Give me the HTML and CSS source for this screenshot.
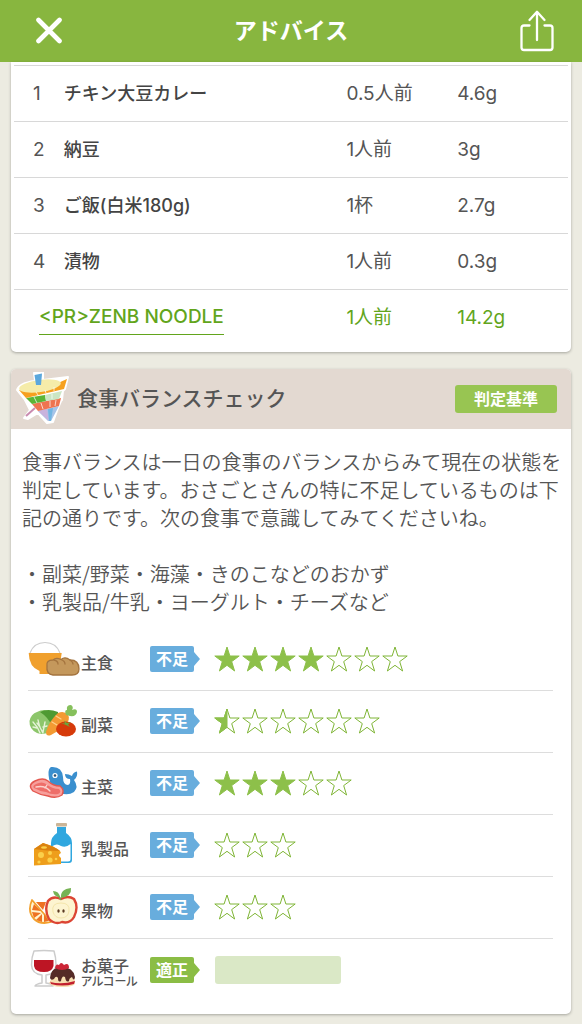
FILE: index.html
```html
<!DOCTYPE html>
<html lang="ja">
<head>
    <meta charset="UTF-8">
    <meta name="viewport" content="width=device-width, initial-scale=1.0">
    <title>アドバイス</title>
    <link rel="stylesheet" href="styles.css">
</head>
<body>
    <svg width="0" height="0" class="defs" aria-hidden="true">
        <symbol id="star" viewBox="0 0 26 26">
            <path d="M13 1 L15.9 10 H25.2 L17.7 15.6 L20.6 25 L13 19.3 L5.4 25 L8.3 15.6 L0.8 10 H10.1 Z" />
        </symbol>
    </svg>

    <header class="topbar">
        <button type="button" class="icon-btn" aria-label="閉じる">
            <svg width="28" height="28" viewBox="0 0 28 28" fill="none" stroke="#fff" stroke-width="4.6" stroke-linecap="round">
                <path d="M3.500 3 L24.500 24 M24.500 3 L3.500 24" />
            </svg>
        </button>
        <h1>アドバイス</h1>
        <button type="button" class="icon-btn" aria-label="共有">
            <svg width="36" height="42" viewBox="0 0 36 42" fill="none" stroke="#fff" stroke-width="2.300" stroke-linecap="round" stroke-linejoin="round">
                <path d="M10.500 15.500 H5 Q2.500 15.500 2.500 18 V37.500 Q2.500 40 5 40 H31 Q33.500 40 33.500 37.500 V18 Q33.500 15.500 31 15.500 H25.500" />
                <path d="M18 30 V1.800 M10.500 10 L18 1.800 L25.500 10" />
            </svg>
        </button>
    </header>

    <main>
        <section class="card foods">
            <table>
                <colgroup>
                    <col class="col-no">
                    <col class="col-name">
                    <col class="col-amount">
                    <col class="col-gram">
                </colgroup>
                <tbody>
                    <tr><td class="no">1</td><th scope="row">チキン大豆カレー</th><td>0.5人前</td><td>4.6g</td></tr>
                    <tr><td class="no">2</td><th scope="row">納豆</th><td>1人前</td><td>3g</td></tr>
                    <tr><td class="no">3</td><th scope="row">ご飯(白米180g)</th><td>1杯</td><td>2.7g</td></tr>
                    <tr><td class="no">4</td><th scope="row">漬物</th><td>1人前</td><td>0.3g</td></tr>
                    <tr class="pr"><th scope="row" colspan="2"><a href="#">&lt;PR&gt;ZENB NOODLE</a></th><td>1人前</td><td>14.2g</td></tr>
                </tbody>
            </table>
        </section>

        <section class="card balance">
            <div class="card-head">
                <svg width="54" height="54" viewBox="0 0 54 54" aria-hidden="true">
                    <path d="M18 1 L27 0 L27 8 L52 5 L49 17 L47 19 L46 28 L45 29 L42 36 L37 50 L31 51 L22 41 L12 47 L8 46 L14 38 L9 28 L1 18 Q3 11 19 9 Z" fill="#fff" stroke="#fff" stroke-width="2" stroke-linejoin="round" />
                    <path d="M10 44 L19 36" stroke="#c98bb0" stroke-width="2" />
                    <path d="M22 39 L43 34 L35 49 L32 49 Z" fill="#a7c4e8" />
                    <path d="M22 39 L31 37 L33 49 Z" fill="#c9b3dd" />
                    <path d="M32 37 L37 36 L35 49 L33 49 Z" fill="#72b6e3" />
                    <path d="M16 32 L45 26 L43 34 L22 39 Z" fill="#ee7450" />
                    <path d="M10 26 L29 23 L30 29 L16 32 Z" fill="#5bb536" />
                    <path d="M29 23 L46 19 L43 27 L30 29 Z" fill="#cbe6c4" />
                    <path d="M3 18 Q25 20 51 7 L48 17 L10 26 Z" fill="#f6a01f" />
                    <ellipse cx="24" cy="14" rx="21" ry="6" transform="rotate(-8 24 14)" fill="#f5eca9" />
                    <path d="M18.500 3 L26 1.500 L25 13 L20 13 Z" fill="#5ba7dc" />
                    <path d="M20 20 L22 23 M29 18 L30 21 M38 15 L38 19 M18 25 L21 31 M25 31 L27 37 M34 29 L34 35 M40 28 L39 34 M36 22 L36 27" stroke="#fff" stroke-width="0.900" fill="none" opacity="0.800" />
                </svg>
                <h2>食事バランスチェック</h2>
                <button type="button" class="criteria">判定基準</button>
            </div>

            <div class="advice">
                <p>食事バランスは一日の食事のバランスからみて現在の状態を判定しています。おさごとさんの特に不足しているものは下記の通りです。次の食事で意識してみてくださいね。</p>
                <p>・副菜/野菜・海藻・きのこなどのおかず<br>・乳製品/牛乳・ヨーグルト・チーズなど</p>
            </div>

            <ul class="ratings">
                <li>
                    <svg class="food" viewBox="0 0 52 46" aria-hidden="true">
                        <path d="M2 17 Q6 6.500 17 6.500 T32 17" fill="#fff" stroke="#ccc" stroke-width="1.200" />
                        <path d="M0.700 17 H33.700 Q33 30 24 34 V38 H11.500 V35 Q1 31 0.700 17 Z" fill="#f0a02e" />
                        <path d="M19 30 Q18 24 25 24 Q28 21 33 23.500 Q37 20 42 24 Q51 24 51 33 Q51 39 44 39 H25 Q18 38 19 30 Z" fill="#c4985c" stroke="#a4743f" stroke-width="1.300" />
                        <path d="M26 24 Q30 25 30 28 M33 23.500 Q37 25 37 28 M42 24 Q45 26 45 28" fill="none" stroke="#a4743f" stroke-width="1.300" stroke-linecap="round" />
                    </svg>
                    <span class="label">主食</span>
                    <span class="badge">不足</span>
                    <span class="stars" role="img" aria-label="7個中4個">
                        <svg class="star on"><use href="#star" /></svg>
                        <svg class="star on"><use href="#star" /></svg>
                        <svg class="star on"><use href="#star" /></svg>
                        <svg class="star on"><use href="#star" /></svg>
                        <svg class="star"><use href="#star" /></svg>
                        <svg class="star"><use href="#star" /></svg>
                        <svg class="star"><use href="#star" /></svg>
                    </span>
                </li>
                <li>
                    <svg class="food" viewBox="0 0 52 46" aria-hidden="true">
                        <path d="M9 14 Q16 10 24 14 Q30 19 26 31 Q18 38 9 35 Q1 31 1.500 23 Q3 16 9 14 Z" fill="#8dc66b" />
                        <path d="M12 14 Q20 10 30 14 Q31 22 24 28 Q20 19 12 14 Z" fill="#4f9a32" />
                        <path d="M5 24 Q10 29 12 35 M5 29 L9 30 M10 22 Q11 29 15 35 M12 29 L9 25 M17 24 L15 34 M15 29 L19 28" fill="none" stroke="#e6f3d8" stroke-width="1.400" stroke-linecap="round" />
                        <path d="M30 15 Q36 12 40 17 Q43 21 37 27 Q31 33 23 37 Q18 39 18 34 Q21 23 30 15 Z" fill="#f39a32" />
                        <path d="M28 18 L33 21 M24 24 L29 27 M30 30 L33 32" stroke="#ffd08a" stroke-width="1.300" stroke-linecap="round" />
                        <path d="M38 17 Q36 12 39 12 Q38 7 43 7 Q46 9 44 12 Q49 10 49 14 Q48 19 42 18 Z" fill="#86c05c" />
                        <ellipse cx="38" cy="31" rx="10" ry="7.500" fill="#d63a0a" />
                        <path d="M38 27 L33 25 L37 25.500 L36 22.500 L39 25 L43 24 L40 26.500 L42 29 Z" fill="#68a83e" />
                    </svg>
                    <span class="label">副菜</span>
                    <span class="badge">不足</span>
                    <span class="stars" role="img" aria-label="6個中0.5個">
                        <svg class="star" viewBox="0 0 26 26">
                            <path d="M13 1 L15.9 10 H25.2 L17.7 15.6 L20.6 25 L13 19.3 L5.4 25 L8.3 15.6 L0.8 10 H10.1 Z" />
                            <path class="half" d="M13 1 V19.3 L5.4 25 L8.3 15.6 L0.8 10 H10.1 Z" />
                        </svg>
                        <svg class="star"><use href="#star" /></svg>
                        <svg class="star"><use href="#star" /></svg>
                        <svg class="star"><use href="#star" /></svg>
                        <svg class="star"><use href="#star" /></svg>
                        <svg class="star"><use href="#star" /></svg>
                    </span>
                </li>
                <li>
                    <svg class="food" viewBox="0 0 52 46" aria-hidden="true">
                        <path d="M23 7 Q34 6 35 17 Q35 25 40 25 Q43 24 42 19 Q37 19 37 14 Q41 14 44 16 Q45 12 49 11.500 Q50 17 46 20 Q51 27 46 32 Q40 36 32 33 Q20 26 20.500 12 Q21 8 23 7 Z" fill="#3a8fce" />
                        <circle cx="27" cy="15.500" r="2.600" fill="#fff" />
                        <circle cx="27" cy="15.500" r="1.300" fill="#274f70" />
                        <path d="M7 21 Q15 17 20 21 Q25 26 32 26 Q37 30 34 35 Q28 39 20 36 Q12 35 5 31 Q-1 25 7 21 Z" fill="#f7a09c" stroke="#e4574f" stroke-width="1.400" />
                        <path d="M8 24 Q14 21 18 24 Q24 29 31 29 Q34 32 30 34 Q24 35 18 32 Q11 31 6 28 Q4 26 8 24 Z" fill="#ee6e69" />
                        <path d="M8 27 Q17 25 22 31 M17 28 L19 25" fill="none" stroke="#fcd5d0" stroke-width="1.300" stroke-linecap="round" />
                    </svg>
                    <span class="label">主菜</span>
                    <span class="badge">不足</span>
                    <span class="stars" role="img" aria-label="5個中3個">
                        <svg class="star on"><use href="#star" /></svg>
                        <svg class="star on"><use href="#star" /></svg>
                        <svg class="star on"><use href="#star" /></svg>
                        <svg class="star"><use href="#star" /></svg>
                        <svg class="star"><use href="#star" /></svg>
                    </span>
                </li>
                <li>
                    <svg class="food" viewBox="0 0 52 46" aria-hidden="true">
                        <rect x="28" y="1" width="11" height="3.500" rx="1" fill="#cbb597" />
                        <path d="M29 5 H38 V11 Q44 15 44 21 V38 Q44 41 41 41 H26 Q23 41 23 38 V21 Q23 15 29 11 Z" fill="#30a7df" />
                        <path d="M24.500 24 Q29 21 33 24 Q38 26 42.500 22 V37 Q42.500 39.500 40 39.500 H25 Z" fill="#fff" />
                        <path d="M6 27 L15 21 Q26 24 32 29 L33 31 Q29 33 33 36 V42 L6 43.500 Z" fill="#ee9e1b" />
                        <path d="M6 27 L15 21 Q26 24 32 29 Q18 29 6 27 Z" fill="#db8210" />
                        <g fill="#fbd04a">
                            <circle cx="13" cy="33" r="3" />
                            <circle cx="22" cy="31" r="2" />
                            <circle cx="22" cy="38" r="2.600" />
                            <circle cx="11" cy="40" r="1.600" />
                            <circle cx="28" cy="37" r="1.300" />
                            <ellipse cx="16" cy="25.500" rx="3" ry="1.300" />
                        </g>
                    </svg>
                    <span class="label">乳製品</span>
                    <span class="badge">不足</span>
                    <span class="stars" role="img" aria-label="3個中0個">
                        <svg class="star"><use href="#star" /></svg>
                        <svg class="star"><use href="#star" /></svg>
                        <svg class="star"><use href="#star" /></svg>
                    </span>
                </li>
                <li>
                    <svg class="food" viewBox="0 0 52 46" aria-hidden="true">
                        <path d="M4 16 Q-1 27 6 35 Q12 41 23 38 Z" fill="#fff3cf" stroke="#f3a12e" stroke-width="1.800" stroke-linejoin="round" />
                        <path d="M6 20 L13 27 L4 26 Z M4 28 L13 29 L6 34 Z M8 36 L14 30 L14 38 Z M8 18 L18 18 L15 26 Z M16 30 L21 37 L16 38 Z" fill="#ee7222" />
                        <path d="M33 15 Q40 11 46 15 Q51 23 46 33 Q42 40 34 38 Q27 41 21 35 Q16 26 20 17 Q25 11 33 15 Z" fill="#fdf4d0" stroke="#dc4534" stroke-width="2.400" />
                        <path d="M33 16 Q31 12 29 10" fill="none" stroke="#75a553" stroke-width="1.600" />
                        <path d="M33 14 Q32 5 43 4 Q44 12 33 14 Z M32 13 Q26 13 25 7 Q31 7 32 13 Z" fill="#76b355" />
                        <path d="M33 19 Q23 19 25 28 Q27 34 33 34 Q40 34 41 27 Q42 19 33 19 Z" fill="none" stroke="#f4e5ab" />
                        <ellipse cx="30.500" cy="27" rx="1.200" ry="1.700" fill="#5b3a22" />
                        <ellipse cx="35.500" cy="27" rx="1.200" ry="1.700" fill="#5b3a22" />
                    </svg>
                    <span class="label">果物</span>
                    <span class="badge">不足</span>
                    <span class="stars" role="img" aria-label="3個中0個">
                        <svg class="star"><use href="#star" /></svg>
                        <svg class="star"><use href="#star" /></svg>
                        <svg class="star"><use href="#star" /></svg>
                    </span>
                </li>
                <li>
                    <svg class="food" viewBox="0 0 52 46" aria-hidden="true">
                        <path d="M6 4 Q16 3 26 4 Q28 10 28 18 Q27 27 18 28 V36 Q24 37 25 39 H7 Q8 37 14 36 V28 Q4 27 3.500 18 Q3.500 10 6 4 Z" fill="#fff" stroke="#ccc" stroke-width="1.500" stroke-linejoin="round" />
                        <path d="M6 13 H25.500 V19 Q24 25 16 25 Q7 25 6 19 Z" fill="#bd1524" />
                        <path d="M21 35 H47 Q48 40 34 40 Q22 40 21 35 Z" fill="#f7dfb1" />
                        <path d="M22 34 H47 L46 37 Q34 40 23 37 Z" fill="#c2202e" />
                        <path d="M23 32 Q24 21 35 20 Q45 21 47 34 Q34 38 22 35 Z" fill="#f7dfb1" />
                        <path d="M22 31 Q23 20 34 20 Q45 20 47 30 Q46 35 44 30 Q41 31 41 34 Q38 36 37 30 Q34 28 33 34 Q30 36 30 31 Q28 28 26 32 Q23 34 22 31 Z" fill="#552b27" />
                        <path d="M27 21 Q28 16 31 18 Q33 14 36 18 Q41 15 41 21 Q34 25 27 21 Z" fill="#cc2637" />
                    </svg>
                    <span class="label">お菓子<small>アルコール</small></span>
                    <span class="badge good">適正</span>
                    <span class="bar"></span>
                </li>
            </ul>
        </section>
    </main>
</body>
</html>
```

FILE: styles.css
```css
* {
    box-sizing: border-box;
}

body {
    font-family: Inter, 'Noto Sans CJK JP', sans-serif;
    font-size: 18px;
    margin: 0;
    background: #ecebe1;
    color: #555;
}

h1, h2, p, ul {
    margin: 0;
    padding: 0;
}

button {
    font-family: inherit;
    border: none;
    cursor: pointer;
}

.defs {
    position: absolute;
}

.topbar {
    display: flex;
    align-items: center;
    justify-content: space-between;
    height: 62px;
    padding: 0 27px 0 35px;
    background: #88b63f;
    color: #fff;
}

.topbar h1 {
    padding-bottom: 4px;
    font-size: 23px;
    font-weight: 700;
}

.icon-btn {
    display: flex;
    padding: 0;
    background: none;
}

.card {
    margin: 0 11px 17px;
    background: #fff;
    border-radius: 5px;
    box-shadow: 0 1px 3px rgba(0, 0, 0, 0.3);
}

/* food list */
.foods {
    padding: 3px 3px 6px;
    border-radius: 0 0 5px 5px;
}

table {
    width: 100%;
    table-layout: fixed;
    border-collapse: collapse;
}

.col-no { width: 9%; }
.col-name { width: 51%; }
.col-amount { width: 20%; }
.col-gram { width: 20%; }

tr {
    height: 56px;
    border-top: 1px solid #d8d8d8;
}

td, th {
    padding: 0;
    text-align: left;
    font-weight: 400;
    line-height: 24px;
}

td {
    font-size: 19px;
}

th {
    font-weight: 500;
    color: #444;
}

.no {
    padding-left: 19px;
}

.pr td, .pr a {
    color: #62a51c;
}

.pr th {
    padding-left: 25px;
}

.pr a {
    display: inline-block;
    border-bottom: 1px solid #62a51c;
    font-size: 19px;
    line-height: 34px;
    text-decoration: none;
}

/* balance check */
.card-head {
    display: flex;
    align-items: center;
    height: 60px;
    padding: 0 14px 0 5px;
    background: #e3d9d1;
    border-radius: 5px 5px 0 0;
}

.card-head h2 {
    flex: 1;
    margin-left: 7px;
    font-size: 21px;
    font-weight: 500;
    line-height: 28px;
}

.criteria {
    width: 102px;
    height: 28px;
    padding: 0;
    border-radius: 3px;
    background: #98c552;
    color: #fff;
    font-size: 16px;
    font-weight: 700;
    line-height: 28px;
}

.advice {
    padding: 19px 9px 0 11px;
    font-family: 'Noto Sans CJK JP', sans-serif;
    font-size: 20px;
    font-weight: 350;
    line-height: 28px;
}

.advice p + p {
    margin-top: 28px;
}

.ratings {
    list-style: none;
    margin: 13px 18px 0 17px;
    padding-bottom: 13px;
}

.ratings li {
    display: flex;
    align-items: center;
    height: 62px;
    border-bottom: 1px solid #ddd;
}

.ratings li:last-child {
    border-bottom: none;
}

.food {
    width: 52px;
    height: 46px;
}

.label {
    width: 70px;
    padding-left: 1px;
    padding-top: 8px;
    font-size: 16px;
    font-weight: 500;
    line-height: 16px;
}

.label small {
    display: block;
    font-size: 12px;
    font-feature-settings: "palt";
}

.badge {
    position: relative;
    width: 44px;
    height: 26px;
    border-radius: 2px;
    background: #68addd;
    color: #fff;
    font-size: 16px;
    font-weight: 700;
    line-height: 26px;
    text-align: center;
}

.badge::after {
    content: "";
    position: absolute;
    left: 100%;
    top: 6px;
    border: 7px solid transparent;
    border-left: 6px solid #68addd;
    border-right: none;
}

.badge.good {
    background: #8bbd45;
}

.badge.good::after {
    border-left-color: #8bbd45;
}

.stars {
    display: flex;
    gap: 2px;
    margin-left: 20px;
}

.star {
    width: 26px;
    height: 26px;
    fill: #fff;
    stroke: #7fb536;
    stroke-width: 1;
}

.star.on, .half {
    fill: #8dc04a;
    stroke: #8dc04a;
}

.bar {
    width: 126px;
    height: 28px;
    margin-left: 21px;
    border-radius: 3px;
    background: #dae8c6;
}
```
